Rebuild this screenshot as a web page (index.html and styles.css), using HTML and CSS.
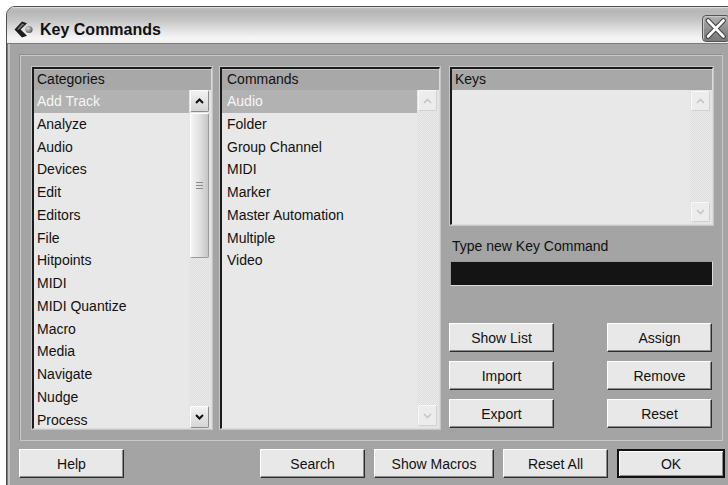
FILE: index.html
```html
<!DOCTYPE html>
<html lang="en">
<head>
<meta charset="utf-8">
<title>Key Commands</title>
<link rel="stylesheet" href="styles.css">
</head>
<body>
<div class="window">
  <header class="titlebar">
    <svg class="app-icon" width="22" height="22" viewBox="0 0 22 22" aria-hidden="true">
      <defs>
        <radialGradient id="ball" cx="0.35" cy="0.35" r="0.7">
          <stop offset="0" stop-color="#d8d8d8"/>
          <stop offset="1" stop-color="#5a5a5a"/>
        </radialGradient>
      </defs>
      <polygon points="1.5,10.5 9,2.5 14,4.2 7.6,10.5 14,16.8 9,18.5" fill="#1c1c1c"/>
      <polygon points="4,10.5 9.3,4.6 11.2,5.3 5.9,10.5" fill="#7a7a7a"/>
      <circle cx="16" cy="10.5" r="3.6" fill="url(#ball)"/>
    </svg>
    <h1 class="title">Key Commands</h1>
    <button class="close-btn" aria-label="Close">
      <svg width="26" height="25" viewBox="0 0 26 25" aria-hidden="true">
        <path d="M5 4.5 L20.5 20.5 M20.5 4.5 L5 20.5" stroke="#4a4a4a" stroke-width="5" stroke-linecap="round"/>
        <path d="M5 4.5 L20.5 20.5 M20.5 4.5 L5 20.5" stroke="#ffffff" stroke-width="2.6" stroke-linecap="round"/>
      </svg>
    </button>
  </header>

  <main class="client">
    <section class="group">
      <div class="list list--categories">
        <div class="list-head">Categories</div>
        <div class="list-body">
          <ul class="rows">
            <li class="row is-selected">Add Track</li>
            <li class="row">Analyze</li>
            <li class="row">Audio</li>
            <li class="row">Devices</li>
            <li class="row">Edit</li>
            <li class="row">Editors</li>
            <li class="row">File</li>
            <li class="row">Hitpoints</li>
            <li class="row">MIDI</li>
            <li class="row">MIDI Quantize</li>
            <li class="row">Macro</li>
            <li class="row">Media</li>
            <li class="row">Navigate</li>
            <li class="row">Nudge</li>
            <li class="row">Process</li>
          </ul>
          <div class="scrollbar">
            <div class="sb-btn"><svg width="9" height="6" viewBox="0 0 9 6"><polyline points="1,5 4.5,1.5 8,5" fill="none" stroke="#111" stroke-width="2"/></svg></div>
            <div class="sb-thumb"><span class="grip"></span></div>
            <div class="sb-track"></div>
            <div class="sb-btn"><svg width="9" height="6" viewBox="0 0 9 6"><polyline points="1,1 4.5,4.5 8,1" fill="none" stroke="#111" stroke-width="2"/></svg></div>
          </div>
        </div>
      </div>

      <div class="list list--commands">
        <div class="list-head">Commands</div>
        <div class="list-body">
          <ul class="rows">
            <li class="row is-selected">Audio</li>
            <li class="row">Folder</li>
            <li class="row">Group Channel</li>
            <li class="row">MIDI</li>
            <li class="row">Marker</li>
            <li class="row">Master Automation</li>
            <li class="row">Multiple</li>
            <li class="row">Video</li>
          </ul>
          <div class="scrollbar">
            <div class="sb-btn is-disabled"><svg width="9" height="6" viewBox="0 0 9 6"><polyline points="1,5 4.5,1.5 8,5" fill="none" stroke="#c6c6c6" stroke-width="1.6"/></svg></div>
            <div class="sb-track"></div>
            <div class="sb-btn is-disabled"><svg width="9" height="6" viewBox="0 0 9 6"><polyline points="1,1 4.5,4.5 8,1" fill="none" stroke="#c6c6c6" stroke-width="1.6"/></svg></div>
          </div>
        </div>
      </div>

      <div class="side">
        <div class="list list--keys">
          <div class="list-head">Keys</div>
          <div class="list-body">
            <ul class="rows"></ul>
            <div class="scrollbar">
              <div class="sb-btn is-disabled"><svg width="9" height="6" viewBox="0 0 9 6"><polyline points="1,5 4.5,1.5 8,5" fill="none" stroke="#c6c6c6" stroke-width="1.6"/></svg></div>
              <div class="sb-track"></div>
              <div class="sb-btn is-disabled"><svg width="9" height="6" viewBox="0 0 9 6"><polyline points="1,1 4.5,4.5 8,1" fill="none" stroke="#c6c6c6" stroke-width="1.6"/></svg></div>
            </div>
          </div>
        </div>

        <label class="field-label" for="new-key">Type new Key Command</label>
        <input class="key-input" id="new-key" type="text">

        <div class="actions">
          <button class="btn">Show List</button>
          <button class="btn">Assign</button>
          <button class="btn">Import</button>
          <button class="btn">Remove</button>
          <button class="btn">Export</button>
          <button class="btn">Reset</button>
        </div>
      </div>
    </section>

    <footer class="footer">
      <button class="btn btn--help">Help</button>
      <div class="footer-right">
        <button class="btn">Search</button>
        <button class="btn btn--wide">Show Macros</button>
        <button class="btn">Reset All</button>
        <button class="btn btn--default">OK</button>
      </div>
    </footer>
  </main>
</div>
</body>
</html>
```

FILE: styles.css
```css
* { box-sizing: border-box; }

html, body { margin: 0; padding: 0; }

body {
  width: 728px;
  height: 485px;
  overflow: hidden;
  background: #ffffff;
  font-family: "Liberation Sans", Arial, sans-serif;
  font-size: 14px;
  color: #111;
}

/* ---------- window frame ---------- */
.window {
  margin: 6px 0 0 6px;
  width: 726px;
  height: 492px;
  border: 1px solid #4e4e4e;
  border-top-left-radius: 9px;
  overflow: hidden;
  background: #a4a4a4;
  display: flex;
  flex-direction: column;
}

.titlebar {
  height: 37px;
  flex: none;
  display: flex;
  align-items: flex-start;
  padding: 0 1px 0 6px;
  background: linear-gradient(to bottom, #c2c2c2 0, #b6b6b6 12%, #c4c4c4 35%, #e2e2e2 65%, #f6f6f6 88%, #eeeeee 100%);
  box-shadow: inset 0 1px 0 #dedede;
  border-bottom: 1px solid #7c7c7c;
}

.app-icon { margin-top: 12px; flex: none; }

.title {
  margin: 13px 0 0 5px;
  font-size: 16px;
  line-height: 20px;
  font-weight: bold;
  color: #111;
}

.close-btn {
  margin: 8px 0 0 auto;
  width: 28px;
  height: 27px;
  padding: 0;
  display: flex;
  align-items: center;
  justify-content: center;
  border: 1px solid #555;
  border-radius: 4px;
  background: linear-gradient(to bottom, #b2b2b2, #8e8e8e 55%, #7a7a7a);
  box-shadow: inset 1px 1px 0 #c8c8c8;
}

/* ---------- client area ---------- */
.client {
  flex: 1;
  display: flex;
  flex-direction: column;
  padding-top: 11px;
  box-shadow: inset 1px 0 0 #7a7a7a, inset 3px 0 0 #c4c4c4;
}

.group {
  margin-left: 13px;
  width: 703px;
  height: 386px;
  flex: none;
  display: flex;
  padding: 11px 9px 11px 11px;
  border: 1px solid #c8c8c8;
  box-shadow: -1px -1px 0 #8e8e8e;
}

/* ---------- list boxes ---------- */
.list {
  display: flex;
  flex-direction: column;
  background: #e8e8e8;
  border-style: solid;
  border-width: 2px 1px 1px 2px;
  border-color: #1c1c1c #dcdcdc #dcdcdc #1c1c1c;
  outline: 1px solid #c6c6c6;
  overflow: hidden;
}

.list--categories { width: 180px; height: 362px; }
.list--commands { width: 220px; height: 362px; margin-left: 8px; }
.list--keys { width: 263px; height: 158px; }

.list-head {
  height: 21px;
  flex: none;
  line-height: 21px;
  padding-left: 3px;
  background: #a8a8a8;
  box-shadow: inset 0 1px 0 #c4c4c4;
  color: #111;
}

.list--commands .list-head,
.list--commands .row { padding-left: 5px; }

.list-body {
  flex: 1;
  min-height: 0;
  display: flex;
}

.rows {
  flex: 1;
  min-width: 0;
  margin: 0;
  padding: 0;
  list-style: none;
  overflow: hidden;
}

.row {
  height: 22.75px;
  line-height: 22.75px;
  padding-left: 3px;
  white-space: nowrap;
  color: #111;
}

.row.is-selected {
  background: #b2b2b2;
  color: #f6f6f6;
}

/* ---------- scrollbars ---------- */
.scrollbar {
  width: 22px;
  flex: none;
  display: flex;
  flex-direction: column;
  padding: 0 2px 0 1px;
  background: repeating-conic-gradient(#ececec 0 25%, #dcdcdc 0 50%) 0 0 / 2px 2px;
}

.sb-btn {
  height: 22px;
  flex: none;
  display: flex;
  align-items: center;
  justify-content: center;
  border: 1px solid;
  border-color: #ffffff #8c8c8c #8c8c8c #ffffff;
  border-radius: 2px;
  background: linear-gradient(to bottom, #f2f2f2, #d6d6d6);
}

.sb-btn.is-disabled {
  border-color: #f8f8f8 #d0d0d0 #d0d0d0 #f8f8f8;
  background: #ececec;
}

.list--commands .sb-btn { height: 21px; }
.list--commands .scrollbar { padding-bottom: 2px; }
.list--keys .sb-btn { height: 20px; }
.list--keys .scrollbar { padding-top: 1px; padding-bottom: 2px; }

.sb-thumb {
  height: 145px;
  flex: none;
  margin-top: 1px;
  display: flex;
  align-items: center;
  justify-content: center;
  border: 1px solid;
  border-color: #ffffff #9a9a9a #9a9a9a #ffffff;
  border-radius: 2px;
  background: linear-gradient(to right, #f4f4f4 0, #e4e4e4 45%, #c6c6c6 100%);
}

.grip {
  width: 7px;
  height: 7px;
  background: repeating-linear-gradient(to bottom, #8a8a8a 0 1px, transparent 1px 3px);
}

.sb-track { flex: 1; }

/* ---------- right column ---------- */
.side {
  margin-left: 10px;
  width: 263px;
  display: flex;
  flex-direction: column;
}

.field-label {
  margin: 13px 0 0 2px;
  line-height: 16px;
  color: #111;
}

.key-input {
  margin-top: 7px;
  width: 263px;
  height: 25px;
  background: #141414;
  border: 1px solid;
  border-color: #9a9a9a #dadada #dadada #9a9a9a;
  outline: none;
  padding: 0;
}

.actions {
  margin: auto 0 1px -1px;
  display: grid;
  grid-template-columns: 105px 106px;
  justify-content: space-between;
  row-gap: 9px;
}

/* ---------- push buttons ---------- */
.btn {
  height: 29px;
  width: 105px;
  padding: 0;
  font-family: inherit;
  font-size: 14px;
  color: #111;
  background: #e8e8e8;
  border: 1px solid;
  border-color: #ffffff #2c2c2c #2c2c2c #ffffff;
  box-shadow: inset -1px -1px 0 #8c8c8c;
}

.btn--wide { width: 120px; }

.btn--default {
  width: 108px;
  border: 2px solid #111;
  box-shadow: inset 1px 1px 0 #ffffff, inset -1px -1px 0 #8c8c8c;
}

.footer {
  margin: 8px 0 0 12px;
  width: 706px;
  display: flex;
}

.footer-right {
  margin-left: auto;
  display: flex;
  gap: 9px;
}
```
